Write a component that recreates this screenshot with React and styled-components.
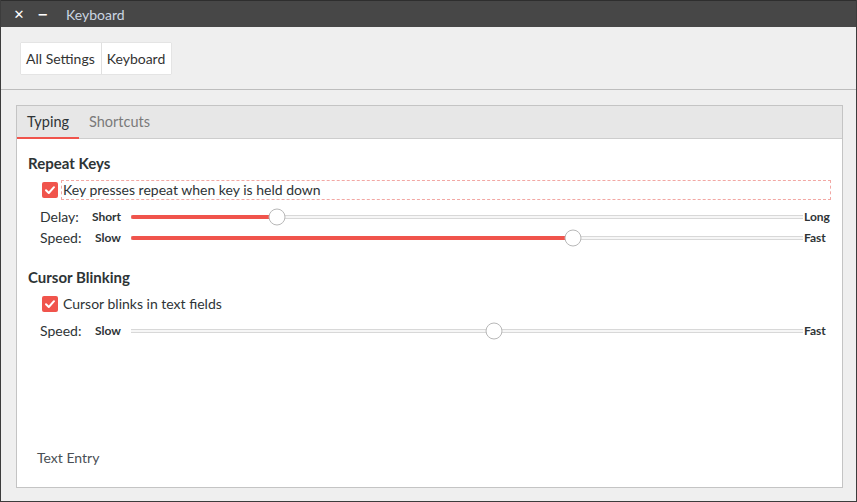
import React from "react";
import styled, { createGlobalStyle } from "styled-components";

const GlobalStyle = createGlobalStyle`
  body {
    margin: 0;
    background: #efefef;
    font-family: Lato, "Open Sans", sans-serif;
    color: #333;
  }
`;

function Slider({ value, filled }) {
  const pct = value * 100 + "%";
  return (
    <Track>
      {filled && <Fill style={{ width: pct }} />}
      <Thumb style={{ left: pct }} />
    </Track>
  );
}

function SliderRow({ label, min, max, value, filled }) {
  return (
    <SliderLine>
      <RowLabel>{label}</RowLabel>
      <MinLabel>{min}</MinLabel>
      <Slider value={value} filled={filled} />
      <MaxLabel>{max}</MaxLabel>
    </SliderLine>
  );
}

function Check({ label, focused }) {
  return (
    <CheckLine>
      <Box>
        <svg width="12" height="12" viewBox="0 0 12 12">
          <path d="M2 6.2 L4.8 9 L10 3.2" stroke="#fff" strokeWidth="2" fill="none" strokeLinecap="round" strokeLinejoin="round" />
        </svg>
      </Box>
      <CheckText focused={focused}>{label}</CheckText>
    </CheckLine>
  );
}

function App() {
  return (
    <>
      <GlobalStyle />
      <Window>
        <TitleBar>
          <WinButton>✕</WinButton>
          <WinButton>−</WinButton>
          <Title>Keyboard</Title>
        </TitleBar>
        <Header>
          <Crumbs>
            <Crumb>All Settings</Crumb>
            <Crumb>Keyboard</Crumb>
          </Crumbs>
        </Header>
        <Body>
          <Panel>
            <Tabs>
              <Tab active>Typing</Tab>
              <Tab>Shortcuts</Tab>
            </Tabs>
            <Content>
              <Heading>Repeat Keys</Heading>
              <Check label="Key presses repeat when key is held down" focused />
              <SliderRow label="Delay:" min="Short" max="Long" value={0.217} filled />
              <SliderRow label="Speed:" min="Slow" max="Fast" value={0.658} filled />
              <Heading second>Cursor Blinking</Heading>
              <Check label="Cursor blinks in text fields" />
              <SliderRow label="Speed:" min="Slow" max="Fast" value={0.54} />
              <Spacer />
              <Footer>Text Entry</Footer>
            </Content>
          </Panel>
        </Body>
      </Window>
    </>
  );
}

export default App;

const Window = styled.div`
  width: 857px;
  height: 502px;
  box-sizing: border-box;
  border: 1px solid #3c3c3c;
  border-top: none;
  display: flex;
  flex-direction: column;
  background: #efefef;
`;
const TitleBar = styled.div`
  height: 27px;
  box-sizing: border-box;
  background: #474747;
  border-top: 1px solid #2e2e2e;
  display: flex;
  align-items: center;
  padding-left: 6px;
  flex-shrink: 0;
`;
const WinButton = styled.span`
  color: #fff;
  font-family: "DejaVu Sans", sans-serif;
  font-weight: bold;
  font-size: 13px;
  width: 24px;
  text-align: center;
`;
const Title = styled.span`
  color: #cbd6e2;
  font-size: 14px;
  margin-left: 11px;
`;
const Header = styled.div`
  height: 63px;
  box-sizing: border-box;
  padding: 16px 0 0 20px;
  border-bottom: 1px solid #bdbdbd;
  flex-shrink: 0;
`;
const Crumbs = styled.div`
  display: inline-flex;
  background: #fff;
  box-shadow: 0 0 1px rgba(0, 0, 0, 0.25);
  height: 31px;
`;
const Crumb = styled.div`
  padding: 0 6px 0 5px;
  display: flex;
  align-items: center;
  font-size: 14px;
  color: #333;
  & + & {
    border-left: 1px solid #e0e0e0;
  }
`;
const Body = styled.div`
  flex: 1;
  padding: 15px 13px 13px 15px;
  display: flex;
`;
const Panel = styled.div`
  flex: 1;
  border: 1px solid #c4c4c4;
  background: #fff;
  display: flex;
  flex-direction: column;
`;
const Tabs = styled.div`
  height: 33px;
  box-sizing: border-box;
  background: #e7e7e7;
  border-bottom: 1px solid #cdcdcd;
  display: flex;
`;
const Tab = styled.div`
  padding: 0 10px;
  display: flex;
  align-items: center;
  font-size: 14.5px;
  color: ${(p) => (p.active ? "#2e3436" : "#7a7a7a")};
  border-bottom: 2px solid ${(p) => (p.active ? "#f0544c" : "transparent")};
  margin-bottom: -1px;
`;
const Content = styled.div`
  flex: 1;
  display: flex;
  flex-direction: column;
  padding: 14px 11px 21px 11px;
`;
const Heading = styled.div`
  font-weight: bold;
  font-size: 15px;
  color: #2e3436;
  height: 20px;
  line-height: 20px;
  margin-top: ${(p) => (p.second ? "19px" : "0")};
`;
const CheckLine = styled.div`
  display: flex;
  align-items: center;
  padding-left: 14px;
  height: 20px;
  margin-top: 7px;
`;
const Box = styled.div`
  width: 16px;
  height: 16px;
  border-radius: 2px;
  background: #f0544c;
  display: flex;
  align-items: center;
  justify-content: center;
  margin-right: 3px;
`;
const CheckText = styled.div`
  flex: 1;
  height: 20px;
  line-height: 18px;
  box-sizing: border-box;
  padding-left: 1px;
  font-size: 14px;
  color: #2e3436;
  border: 1px dashed ${(p) => (p.focused ? "#f2a8a4" : "transparent")};
`;
const SliderLine = styled.div`
  display: grid;
  grid-template-columns: 48px 33px 682px auto;
  align-items: center;
  padding-left: 12px;
  height: 21px;
  margin-top: 6px;
  & + & {
    margin-top: 0;
  }
`;
const RowLabel = styled.div`
  font-size: 14px;
  color: #2e3436;
`;
const MinLabel = styled.div`
  font-size: 12px;
  font-weight: bold;
  color: #2e3436;
  text-align: right;
  white-space: nowrap;
`;
const MaxLabel = styled.div`
  font-size: 12px;
  font-weight: bold;
  color: #2e3436;
  margin-left: 1px;
`;
const Track = styled.div`
  position: relative;
  height: 4px;
  box-sizing: border-box;
  margin-left: 10px;
  border-top: 1px solid #d8d8d8;
  border-bottom: 1px solid #d8d8d8;
  background: #f6f6f6;
`;
const Fill = styled.div`
  position: absolute;
  left: 0;
  top: -1px;
  height: 4px;
  border-radius: 2px;
  background: #f0544c;
`;
const Thumb = styled.div`
  position: absolute;
  top: 50%;
  width: 15px;
  height: 15px;
  border-radius: 50%;
  background: #fff;
  border: 1px solid #b8b8b8;
  transform: translate(-50%, -50%);
`;
const Spacer = styled.div`
  flex: 1;
`;
const Footer = styled.div`
  font-size: 14px;
  color: #4a4f55;
  padding-left: 9px;
`;
